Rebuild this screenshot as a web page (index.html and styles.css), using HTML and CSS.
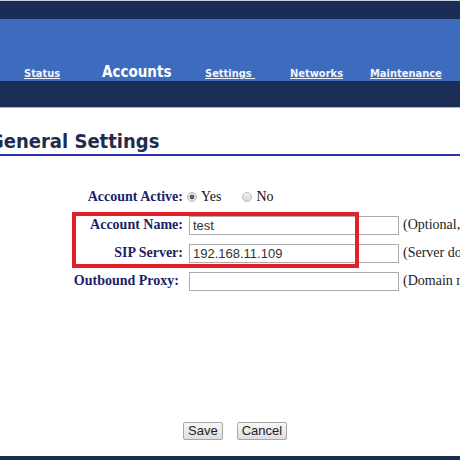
FILE: index.html
```html
<!DOCTYPE html>
<html>
<head>
<meta charset="utf-8">
<title>Accounts - General Settings</title>
<link rel="stylesheet" href="styles.css">
</head>
<body>
<div class="page">
  <header class="header">
    <div class="topbar"></div>
    <nav class="nav">
      <a class="nav-link" href="#">Status</a>
      <a class="nav-link active" href="#">Accounts</a>
      <a class="nav-link" href="#">Settings&nbsp;</a>
      <a class="nav-link" href="#">Networks</a>
      <a class="nav-link" href="#">Maintenance</a>
    </nav>
    <div class="subbar"></div>
  </header>

  <h1 class="title">General Settings</h1>

  <form class="form">
    <div class="row">
      <label class="lbl">Account Active:</label>
      <div class="radios">
        <label class="opt"><input type="radio" name="active" class="radio" checked> Yes</label>
        <label class="opt"><input type="radio" name="active" class="radio"> No</label>
      </div>
    </div>
    <div class="row">
      <label class="lbl">Account Name:</label>
      <input class="field" type="text" value="test">
      <span class="note">(Optional, for display only)</span>
    </div>
    <div class="row">
      <label class="lbl">SIP Server:</label>
      <input class="field" type="text" value="192.168.11.109">
      <span class="note">(Server domain name or IP)</span>
    </div>
    <div class="row">
      <label class="lbl lbl-wide">Outbound Proxy:</label>
      <input class="field" type="text" value="">
      <span class="note">(Domain name or IP)</span>
    </div>
    <div class="actions">
      <button type="button" class="btn">Save</button>
      <button type="button" class="btn">Cancel</button>
    </div>
  </form>

  <div class="highlight"></div>
  <div class="footer"></div>
</div>
</body>
</html>
```

FILE: styles.css
```css
html, body {
  margin: 0;
  padding: 0;
  background: #ffffff;
}

.page {
  position: relative;
  width: 460px;
  height: 460px;
  overflow: hidden;
}

.header {
  border-top: 1px solid #c9cfdb;
}

.topbar {
  height: 18px;
  background: #1b2d57;
}

.nav {
  box-sizing: border-box;
  height: 62px;
  padding: 44px 0 0 24px;
  background: #3d6bbd;
  display: grid;
  grid-template-columns: 78px 103px 85px 80px max-content;
  align-items: baseline;
  font-family: "DejaVu Sans Condensed", "DejaVu Sans", sans-serif;
  font-weight: bold;
}

.nav-link {
  color: #f2f5fb;
  font-size: 11px;
  text-decoration: underline;
  white-space: nowrap;
}

.nav-link.active {
  color: #ffffff;
  font-size: 15px;
  text-decoration: none;
}

.subbar {
  height: 26px;
  background: #1b2f56;
  border-bottom: 1px solid #a3b3ca;
}

.title {
  margin: 21px 0 0 0;
  padding: 0 0 1px 0;
  border-bottom: 2px solid #2c34ad;
  font-family: "DejaVu Sans Condensed", "DejaVu Sans", sans-serif;
  font-size: 20px;
  line-height: 24px;
  font-weight: bold;
  color: #1f2d4b;
  text-indent: -11px;
  white-space: nowrap;
}

.form {
  margin: 27px 0 0 0;
  font-family: "Liberation Serif", "Times New Roman", serif;
  font-size: 14px;
}

.row {
  display: grid;
  grid-template-columns: 183px 210px max-content;
  column-gap: 6px;
  height: 28px;
  align-items: center;
  line-height: 28px;
}

.row .note {
  margin-left: -2px;
}

.lbl {
  text-align: right;
  font-weight: bold;
  color: #1c1f68;
  white-space: nowrap;
}

.lbl-wide {
  padding-right: 4px;
}

.radios {
  display: flex;
  align-items: center;
  gap: 21px;
  color: #111111;
  grid-column: 2 / 4;
  margin-left: -2px;
}

.opt {
  display: flex;
  align-items: center;
  gap: 4px;
}

.radio {
  -webkit-appearance: none;
  appearance: none;
  box-sizing: border-box;
  width: 10px;
  height: 10px;
  margin: 0;
  border: 1px solid #bdbdbd;
  border-radius: 50%;
  background: linear-gradient(#f2f2f2, #d9d9d9);
}

.radio:checked {
  background: radial-gradient(circle, #595959 0, #595959 2px, #e2e2e2 2.6px, #d6d6d6 100%);
}

.field {
  box-sizing: border-box;
  width: 210px;
  height: 19px;
  margin: 0;
  padding: 0 3px;
  border: 1px solid #ababab;
  font-family: "Liberation Sans", Arial, sans-serif;
  font-size: 13px;
  color: #333333;
  background: #ffffff;
}

.note {
  color: #222222;
  white-space: nowrap;
}

.actions {
  display: flex;
  gap: 14px;
  margin: 127px 0 0 183px;
}

.btn {
  box-sizing: border-box;
  height: 18px;
  margin: 0;
  padding: 0 4px;
  border: 1px solid #a6a6a6;
  border-radius: 2px;
  background: linear-gradient(#f7f7f7, #dedede);
  font-family: "Liberation Sans", Arial, sans-serif;
  font-size: 13px;
  line-height: 16px;
  color: #222222;
}

.highlight {
  position: absolute;
  left: 72px;
  top: 212px;
  width: 287px;
  height: 56px;
  box-sizing: border-box;
  border: 4px solid #e3202a;
  pointer-events: none;
}

.footer {
  position: absolute;
  left: 0;
  right: 0;
  bottom: 0;
  height: 4px;
  background: #1b2d50;
}
```
